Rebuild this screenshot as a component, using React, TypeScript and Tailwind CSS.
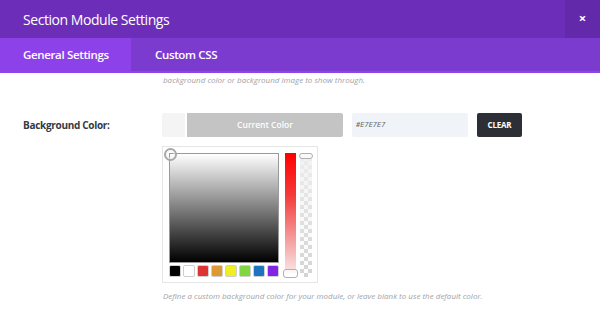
import React from "react";

const swatches = ["#000000", "#ffffff", "#dd3333", "#dd9933", "#eeee22", "#81d742", "#1e73be", "#8224e3"];

export default function App() {
  return (
    <div className="w-[600px] h-[311px] bg-white overflow-hidden font-['Open_Sans',sans-serif]">
      {/* Header */}
      <div className="h-[38px] bg-[#6c2eb9] flex items-stretch justify-between">
        <div className="pl-[23px] flex items-center text-white text-[14px] tracking-[-0.45px]">Section Module Settings</div>
        <div className="w-[35px] bg-[#6229ab] flex items-center justify-center text-white text-[13px] font-bold">×</div>
      </div>
      {/* Tabs */}
      <div className="h-[35px] bg-[#7c3bcf] border-b-[2px] border-[#8e44ec] flex">
        <div className="w-[131px] bg-[#8d42e9] flex items-center pl-[23px] text-white text-[11.5px] font-semibold tracking-[-0.35px]">General Settings</div>
        <div className="pl-[24px] flex items-center text-white text-[11.5px] font-semibold tracking-[-0.35px]">Custom CSS</div>
      </div>
      {/* Content */}
      <div className="pl-[163px] pt-[1px] text-[8px] italic text-[#a0a3a8] leading-[12px]">
        background color or background image to show through.
      </div>
      <div className="flex items-center mt-[27px] h-[24px]">
        <div className="w-[162px] pl-[23px] text-[10px] font-bold text-[#333a44] tracking-[-0.3px]">Background Color:</div>
        <div className="flex h-full">
          <div className="w-[23px] bg-[#f4f4f4] rounded-l-[2px]"></div>
          <div className="ml-[2px] w-[156px] bg-[#c4c4c4] rounded-r-[2px] flex items-center justify-center text-white text-[8.5px] font-semibold">Current Color</div>
        </div>
        <div className="ml-[9px] w-[116px] h-full bg-[#f0f3f7] rounded-[2px] flex items-center pl-[4px] font-['DejaVu_Sans_Mono',monospace] italic text-[7px] text-[#666]">#E7E7E7</div>
        <div className="ml-[9px] w-[45px] h-full bg-[#2c2f36] rounded-[2px] flex items-center justify-center text-white text-[8px] font-bold tracking-[-0.2px]">CLEAR</div>
      </div>
      {/* Picker */}
      <div className="ml-[162px] mt-[9px] w-[156px] h-[137px] border border-[#e5e5e5] relative">
        <div className="absolute left-[6px] top-[6px] flex gap-[6px]">
          <div className="flex flex-col gap-[2px]">
            <div className="relative w-[110px] h-[110px] border border-[#9a9a9a] bg-[linear-gradient(#ffffff,#000000)]">
              <div className="absolute -left-[6px] -top-[6px] w-[13px] h-[13px] rounded-full border-[2px] border-[#a8a8a8] flex items-center justify-center">
                <div className="w-[9px] h-[9px] rounded-full border border-[#f0f0f0]"></div>
              </div>
            </div>
            <div className="flex gap-[2px]">
              {swatches.map((c) => (
                <div key={c} className="w-[12px] h-[12px] rounded-[2px] border border-[#cfcfcf]" style={{ backgroundColor: c }}></div>
              ))}
            </div>
          </div>
          <div className="relative w-[11px] h-[120px] bg-[linear-gradient(#ff0000_0%,#f43a3a_35%,#f5a5a5_75%,#f9e6e6_100%)]">
            <div className="absolute -left-[2px] bottom-[-5px] w-[15px] h-[9px] rounded-[3px] border border-[#b0b0b0] bg-white/70"></div>
          </div>
          <div className="relative w-[14px] h-[124px] -ml-[3px] flex justify-center">
            <div className="w-[12px] h-full bg-[linear-gradient(rgba(240,240,240,0.9),rgba(240,240,240,0)),conic-gradient(#d4d4d4_25%,#ffffff_0_50%,#d4d4d4_0_75%,#ffffff_0)] bg-[length:100%_100%,8px_8px]"></div>
            <div className="absolute left-0 top-0 w-[14px] h-[6px] rounded-[3px] border border-[#b0b0b0] bg-white/60"></div>
          </div>
        </div>
      </div>
      <div className="pl-[163px] mt-[7px] text-[8px] italic text-[#a0a3a8] leading-[12px]">
        Define a custom background color for your module, or leave blank to use the default color.
      </div>
    </div>
  );
}
